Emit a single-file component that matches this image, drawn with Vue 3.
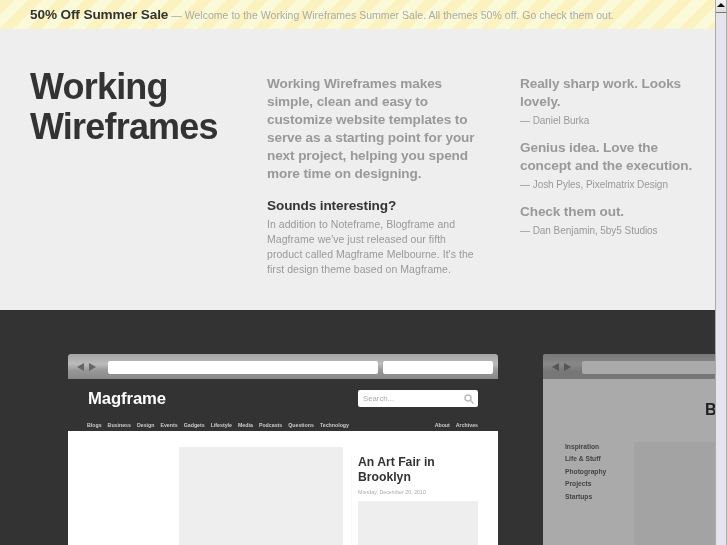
<script setup>
const nav = ['Blogs','Business','Design','Events','Gadgets','Lifestyle','Media','Podcasts','Questions','Technology']
const side = ['Inspiration','Life & Stuff','Photography','Projects','Startups']
</script>

<template>
  <div class="page">
    <main class="main">
      <div class="banner"><strong>50% Off Summer Sale</strong><span> — Welcome to the Working Wireframes Summer Sale. All themes 50% off. Go check them out.</span></div>
      <section class="hero">
        <h1>Working Wireframes</h1>
        <div class="mid">
          <p class="lead">Working Wireframes makes simple, clean and easy to customize website templates to serve as a starting point for your next project, helping you spend more time on designing.</p>
          <h2>Sounds interesting?</h2>
          <p class="body">In addition to Noteframe, Blogframe and Magframe we've just released our fifth product called Magframe Melbourne. It's the first design theme based on Magframe.</p>
        </div>
        <div class="quotes">
          <p class="q">Really sharp work. Looks lovely.</p><p class="by">— Daniel Burka</p>
          <p class="q">Genius idea. Love the concept and the execution.</p><p class="by">— Josh Pyles, Pixelmatrix Design</p>
          <p class="q">Check them out.</p><p class="by">— Dan Benjamin, 5by5 Studios</p>
        </div>
      </section>
      <section class="gallery">
        <div class="win">
          <div class="chrome">
            <svg class="arrows" width="24" height="12" viewBox="0 0 24 12"><path d="M1 6 8 2v8zM20 6 13 2v8z" fill="#666"/></svg>
            <i class="url"></i><i class="find"></i>
          </div>
          <div class="mag-head">
            <div class="mag-top"><span class="logo">Magframe</span>
              <div class="search"><span>Search...</span>
                <svg width="10" height="10" viewBox="0 0 10 10" fill="none" stroke="#bbb" stroke-width="1.500"><circle cx="4" cy="4" r="3"/><path d="M6.300 6.300 9.500 9.500"/></svg>
              </div>
            </div>
            <div class="mag-nav"><span v-for="n in nav" :key="n">{{ n }}</span><b></b><span>About</span><span>Archives</span></div>
          </div>
          <div class="mag-body">
            <div class="pic"></div>
            <div class="art">
              <h3>An Art Fair in Brooklyn</h3>
              <p>Monday, December 20, 2010</p>
              <div class="thumb"></div>
            </div>
          </div>
        </div>
        <div class="win second">
          <div class="chrome">
            <svg class="arrows" width="24" height="12" viewBox="0 0 24 12"><path d="M1 6 8 2v8zM20 6 13 2v8z" fill="#555"/></svg>
            <i class="url"></i>
          </div>
          <div class="b-body">
            <div class="b-logo">Blogframe</div>
            <div class="b-cols">
              <ul><li v-for="s in side" :key="s">{{ s }}</li></ul>
              <div class="b-pic"></div>
            </div>
          </div>
        </div>
      </section>
    </main>
    <aside class="bar">
      <div class="btn"></div>
    </aside>
  </div>
</template>

<style>
html, body { margin: 0; height: 100%; overflow: hidden; }
</style>
<style scoped>
.page { display: flex; width: 727px; height: 545px; overflow: hidden; font-family: "Liberation Sans", Arial, sans-serif; will-change: transform; }
.main { width: 715px; flex: none; overflow: hidden; }
.bar { width: 12px; flex: none; background: #e4e4ec; border-left: 1px solid #aaa; border-right: 1px solid #aaa; box-sizing: border-box; }
.btn { height: 12px; background: linear-gradient(#f4f4f4, #ddd); border-bottom: 1px solid #777; border-radius: 2px 2px 0 0; position: relative; }
.btn::after { content: ""; position: absolute; left: 1px; top: 3px; border: 4px solid transparent; border-top: 0; border-bottom: 4px solid #111; }
.banner { height: 29px; box-sizing: border-box; padding-left: 30px; line-height: 29px; white-space: nowrap; color: #aaa; font-size: 10.500px; letter-spacing: .03px;
  background: repeating-linear-gradient(135deg, #fbf2c0 0 10px, #fbfad8 10px 20px); }
.banner strong { color: #333; font-size: 13.600px; letter-spacing: -.12px; }
.hero { height: 281px; box-sizing: border-box; background: #eee; padding: 38px 0 0 30px; display: grid; grid-template-columns: 237px 253px 180px; }
h1 { margin: 0; font-size: 36px; line-height: 40px; color: #333; letter-spacing: -.8px; width: 200px; }
p, h2, h3 { margin: 0; }
.lead { font-size: 13.600px; letter-spacing: -.12px; line-height: 18px; font-weight: 700; color: #999; width: 215px; margin-top: 8px; }
h2 { font-size: 13.600px; letter-spacing: -.12px; line-height: 18px; color: #333; margin-top: 14px; }
.body { font-size: 10.500px; line-height: 15px; color: #999; width: 215px; margin-top: 2px; letter-spacing: .05px; }
.quotes { margin-top: 8px; }
.q { font-size: 13.600px; letter-spacing: -.12px; line-height: 18px; font-weight: 700; color: #999; }
.by { font-size: 10px; line-height: 16px; color: #999; margin: 2px 0 10px; letter-spacing: -.05px; }
.gallery { height: 235px; background: #333; padding: 44px 0 0 68px; display: flex; gap: 45px; overflow: hidden; }
.win { width: 430px; flex: none; overflow: hidden; border-radius: 3px 3px 0 0; }
.chrome { height: 25px; background: linear-gradient(#a4a4a4, #bbb 40%, #999 65%, #888); display: flex; align-items: center; padding: 0 5px 0 8px; gap: 5px; }
.arrows { flex: none; margin-right: 3px; }
.url { width: 270px; height: 13px; margin-top: 1px; background: #fff; border-radius: 2px; }
.find { width: 110px; height: 13px; margin-top: 1px; background: #fff; border-radius: 2px; }
.mag-head { background: #333; height: 52px; padding: 0 20px 0 19px; }
.mag-top { display: flex; justify-content: space-between; align-items: center; height: 39px; }
.logo { color: #fff; font-size: 16.700px; font-weight: 700; letter-spacing: -.1px; margin-left: 1px; }
.search { width: 120px; height: 17px; background: #fff; border-radius: 2px; font-size: 7.800px; color: #aaa; display: flex; justify-content: space-between; align-items: center; padding: 0 4px 0 5px; box-sizing: border-box; }
.mag-nav { display: flex; gap: 6px; font-size: 5.250px; font-weight: 700; color: #ccc; line-height: 10px; margin-top: 2px; }
.mag-nav b { flex: 1; }
.mag-body { background: #fff; height: 200px; padding: 16px 20px 0 111px; display: flex; }
.pic { width: 164px; height: 200px; background: #eee; flex: none; }
.art { flex: 1; margin: 8px 0 0 8px; border-left: 1px solid #fafafa; padding-left: 6px; }
h3 { font-size: 12.200px; line-height: 15px; color: #333; }
.art p { font-size: 5.300px; color: #aaa; margin-top: 3px; line-height: 8px; }
.thumb { height: 100px; background: #eee; margin-top: 5px; }
.second { background: #aaa; }
.second .chrome { background: linear-gradient(#777, #888 40%, #777 70%, #777); }
.second .url { background: #aaa; margin-left: -1px; }
.b-body { background: #aaa; height: 200px; padding-left: 22px; }
.b-logo { font-size: 16px; font-weight: 700; color: #222; padding: 21px 0 0 140px; height: 42px; white-space: nowrap; line-height: 20px; }
.b-cols { display: flex; }
ul { list-style: none; margin: -1px 0 0; padding: 0; width: 69px; font-size: 6.700px; font-weight: 700; color: #444; line-height: 12.400px; }
.b-pic { width: 300px; height: 200px; background: #a3a3a3; }
</style>
